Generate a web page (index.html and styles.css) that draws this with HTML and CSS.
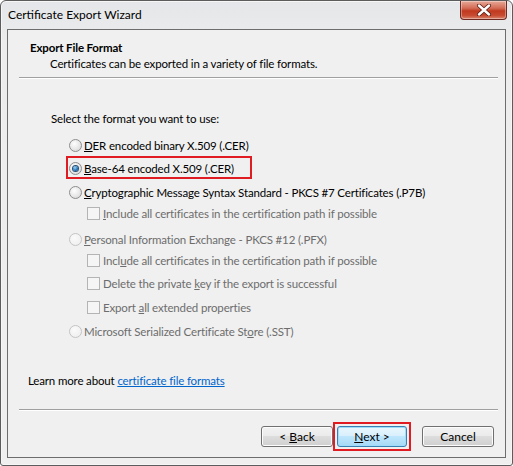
FILE: index.html
```html
<!DOCTYPE html>
<html>
<head>
<meta charset="utf-8">
<link rel="stylesheet" href="styles.css">
</head>
<body>
<div class="window">
  <div class="titlebar">
    <span class="title">Certificate Export Wizard</span>
    <div class="close">
      <svg width="18" height="12" viewBox="0 0 18 12"><path d="M4 1.5 L14 10.5 M14 1.5 L4 10.5" stroke="#5a1a10" stroke-width="4" stroke-linecap="round"/><path d="M4 1.5 L14 10.5 M14 1.5 L4 10.5" stroke="#ffffff" stroke-width="2.4" stroke-linecap="round"/></svg>
    </div>
  </div>
  <div class="client">
    <div class="header">
      <div class="h-title">Export File Format</div>
      <div class="h-sub">Certificates can be exported in a variety of file formats.</div>
    </div>
    <div class="divider top"></div>
    <div class="content">
      <div class="options">
        <div class="prompt">Select the format you want to use:</div>
        <div class="opt radio r1"><span class="rb"></span><span><u>D</u>ER encoded binary X.509 (.CER)</span></div>
        <div class="opt radio r2"><span class="rb sel"></span><span><u>B</u>ase-64 encoded X.509 (.CER)</span><span class="mark"></span></div>
        <div class="opt radio r3"><span class="rb"></span><span><u>C</u>ryptographic Message Syntax Standard - PKCS #7 Certificates (.P7B)</span></div>
        <div class="opt check dis c1"><span class="cb"></span><span><u>I</u>nclude all certificates in the certification path if possible</span></div>
        <div class="opt radio dis r4"><span class="rb dis"></span><span><u>P</u>ersonal Information Exchange - PKCS #12 (.PFX)</span></div>
        <div class="opt check dis c2"><span class="cb"></span><span>Incl<u>u</u>de all certificates in the certification path if possible</span></div>
        <div class="opt check dis c3"><span class="cb"></span><span>Delete the private <u>k</u>ey if the export is successful</span></div>
        <div class="opt check dis c4"><span class="cb"></span><span>Export <u>a</u>ll extended properties</span></div>
        <div class="opt radio dis r5"><span class="rb dis"></span><span>Microsoft Serialized Certificate St<u>o</u>re (.SST)</span></div>
      </div>
      <div class="learn">Learn more about <a class="link">certificate file formats</a></div>
    </div>
    <div class="divider bottom"></div>
    <div class="buttons">
      <button class="btn">&lt; <u>B</u>ack</button>
      <button class="btn def"><u>N</u>ext &gt;<span class="mark2"></span></button>
      <button class="btn cancel">Cancel</button>
    </div>
  </div>
</div>
</body>
</html>
```
FILE: styles.css
```css
* { box-sizing: border-box; }
html, body { margin: 0; padding: 0; }
body {
  width: 513px; height: 466px; overflow: hidden;
  font-family: Lato, "Noto Sans", sans-serif;
  font-size: 11.5px;
  letter-spacing: -0.15px;
  color: #000;
  background: #fff;
}
.window {
  width: 513px; height: 466px;
  border: 1px solid #5c5c5c;
  border-radius: 6px 6px 3px 3px;
  background: linear-gradient(180deg, #e4e6e9 0px, #ececec 40px, #efefef 100%);
  position: relative;
  padding: 0 6px 7px 6px;
  display: flex; flex-direction: column;
  box-shadow: inset 0 0 0 1px #f6f6f6;
}
.titlebar {
  height: 28px;
  display: flex; align-items: center;
  padding-left: 1px;
  padding-bottom: 1px;
}
.title { font-size: 12px; letter-spacing: 0; color: #000; }
.close {
  position: absolute; top: 0; right: 5px;
  width: 47px; height: 19px;
  border: 1px solid #6e2a22; border-top: none;
  border-radius: 0 0 4px 4px;
  background: linear-gradient(180deg, #e8a898 0%, #d36b55 40%, #c0391f 55%, #c84a30 80%, #d98670 100%);
  display: flex; align-items: center; justify-content: center;
  box-shadow: inset 0 0 0 1px rgba(255,255,255,0.35);
}
.client {
  flex: 1;
  border: 1px solid #6d6d6d;
  background: #f0f0f0;
  display: flex; flex-direction: column;
}
.header { padding: 11px 0 0 22px; height: 47px; }
.h-title { font-weight: bold; line-height: 14px; }
.h-sub { padding-left: 20px; line-height: 16px; margin-top: 1px; }
.divider { height: 1px; background: #a0a0a0; border-bottom: 1px solid #fff; box-sizing: content-box; }
.divider.top { margin: 0 7px 0 11px; }
.divider.bottom { margin: 0 7px 0 11px; }
.content { flex: 1; padding: 32px 0 0 20px; }
.options { padding-left: 23px; }
.prompt { line-height: 16px; margin-bottom: 10px; }
.opt { display: flex; align-items: center; height: 16px; position: relative; }
.opt.radio { padding-left: 18px; }
.opt.check { padding-left: 36px; }
.opt.dis { color: #6d6d6d; }
.r2 { margin-top: 7px; }
.r3 { margin-top: 8px; }
.c1 { margin-top: 5px; }
.r4 { margin-top: 10px; }
.c2 { margin-top: 5px; }
.c3 { margin-top: 7px; }
.c4 { margin-top: 8px; }
.r5 { margin-top: 8px; }
.rb {
  width: 13px; height: 13px; border-radius: 50%;
  border: 1px solid #8d8d8d;
  background: radial-gradient(circle at 40% 35%, #fefefe 0%, #e7e7e7 55%, #cfcfcf 100%);
  margin-right: 2px;
  display: flex; align-items: center; justify-content: center;
  flex: none;
}
.rb.dis { border-color: #c4c4c4; background: radial-gradient(circle at 40% 35%, #fafafa 0%, #ececec 100%); }
.rb.sel::after {
  content: ""; width: 5px; height: 5px; border-radius: 50%;
  background: radial-gradient(circle at 40% 35%, #9fd4f5 0%, #1e6fb3 60%, #0d3f78 100%);
  box-shadow: 0 0 0 1px #2a4d74;
}
.cb {
  width: 13px; height: 13px; border: 1px solid #b4b4b4;
  background: #f5f5f5; margin-right: 3px; flex: none;
}
.mark {
  position: absolute; left: 15px; top: -4px; width: 186px; height: 23px;
  border: 2px solid #e11b22;
}
.learn { margin-top: 34px; line-height: 16px; }
.link { color: #0066cc; text-decoration: underline; }
.buttons {
  height: 46px; display: flex; align-items: flex-start;
  padding: 15px 0 0 253px;
}
.btn {
  font-family: inherit; font-size: 12px; letter-spacing: 0; color: #000;
  width: 72px; height: 21px; padding: 0;
  border: 1px solid #707070; border-radius: 3px;
  background: linear-gradient(180deg, #f2f2f2 0%, #ebebeb 45%, #dddddd 50%, #cfcfcf 100%);
  box-shadow: inset 0 0 0 1px #fcfcfc;
  position: relative;
}
.btn.def {
  margin-left: 4px; width: 70px;
  border-color: #3c7fb1;
  background: linear-gradient(180deg, #eaf6fd 0%, #d9f0fc 45%, #bee6fd 50%, #a7d9f5 100%);
  box-shadow: inset 0 0 0 1px #9fdbfa;
}
.btn.cancel { margin-left: 15px; }
.mark2 {
  position: absolute; left: -5px; top: -5px; right: -5px; bottom: -5px;
  border: 2px solid #e11b22;
}
```
